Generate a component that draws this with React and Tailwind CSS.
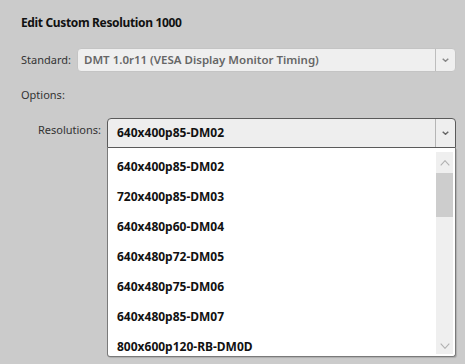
const items = [
  "640x400p85-DM02",
  "720x400p85-DM03",
  "640x480p60-DM04",
  "640x480p72-DM05",
  "640x480p75-DM06",
  "640x480p85-DM07",
  "800x600p120-RB-DM0D",
];

function Chevron({ up = false, small = false }) {
  const w = small ? 7 : 10;
  const h = small ? 4 : 6;
  return (
    <svg width={w} height={h} viewBox={`0 0 ${w} ${h}`}>
      <path
        d={
          up
            ? `M0.7 ${h - 0.7} L${w / 2} 0.7 L${w - 0.7} ${h - 0.7}`
            : `M0.7 0.7 L${w / 2} ${h - 0.7} L${w - 0.7} 0.7`
        }
        fill="none"
        stroke="currentColor"
        strokeWidth={small ? 1.4 : 1.1}
      />
    </svg>
  );
}

export default function App() {
  return (
    <div className="w-[465px] h-[364px] overflow-hidden bg-[#cbcbcb] font-['Noto_Sans',sans-serif] text-[#222]">
      <div className="pl-[21px] pr-[9px]">
        <h1 className="pt-[11px] h-[48px] text-[12px] tracking-[-0.35px] font-bold text-[#111] leading-[24px]">
          Edit Custom Resolution 1000
        </h1>

        {/* Standard */}
        <div className="flex items-center h-[24px]">
          <span className="w-[56px] whitespace-nowrap text-[11px] text-[#333]">Standard:</span>
          <div className="flex-1 flex h-[24px] rounded-[4px] border border-[#c4c4c4] bg-[#efefef]">
            <span className="flex-1 pl-[6px] text-[11.5px] font-semibold text-[#666] leading-[22px]">
              DMT 1.0r11 (VESA Display Monitor Timing)
            </span>
            <div className="w-[20px] border-l border-[#bdbdbd] flex items-center justify-center text-[#888]">
              <Chevron small />
            </div>
          </div>
        </div>

        <div className="h-[46px] flex items-center text-[11px] text-[#333]">
          Options:
        </div>

        {/* Resolutions */}
        <div className="flex">
          <span className="w-[86px] pr-[6px] text-right text-[11px] text-[#333] leading-[24px]">
            Resolutions:
          </span>
          <div className="flex-1 flex flex-col">
            <div className="flex h-[30px] rounded-t-[4px] border border-[#5a5a5a] bg-[#eeeeee]">
              <span className="flex-1 pl-[9px] text-[12px] font-bold text-[#111] leading-[28px]">
                640x400p85-DM02
              </span>
              <div className="w-[20px] border-l border-[#b5b5b5] flex items-center justify-center text-[#666]">
                <Chevron small />
              </div>
            </div>
            <div className="flex h-[209px] rounded-b-[3px] border border-t-0 border-[#7a7a7a] bg-white pt-[4px] pb-[2px] pr-[2px] shadow-[1px_1px_1px_rgba(0,0,0,0.15)]">
              <ul className="flex-1">
                {items.map((it) => (
                  <li
                    key={it}
                    className="h-[30px] pl-[9px] text-[12px] font-bold text-[#111] leading-[30px]"
                  >
                    {it}
                  </li>
                ))}
              </ul>
              <div className="w-[17px] bg-[#efefef] flex flex-col">
                <div className="h-[21px] flex items-center justify-center text-[#b0b0b0]">
                  <Chevron up />
                </div>
                <div className="h-[44px] bg-[#cdcdcd]" />
                <div className="flex-1" />
                <div className="h-[16px] flex items-center justify-center text-[#b0b0b0]">
                  <Chevron />
                </div>
              </div>
            </div>
          </div>
        </div>
      </div>
    </div>
  );
}
